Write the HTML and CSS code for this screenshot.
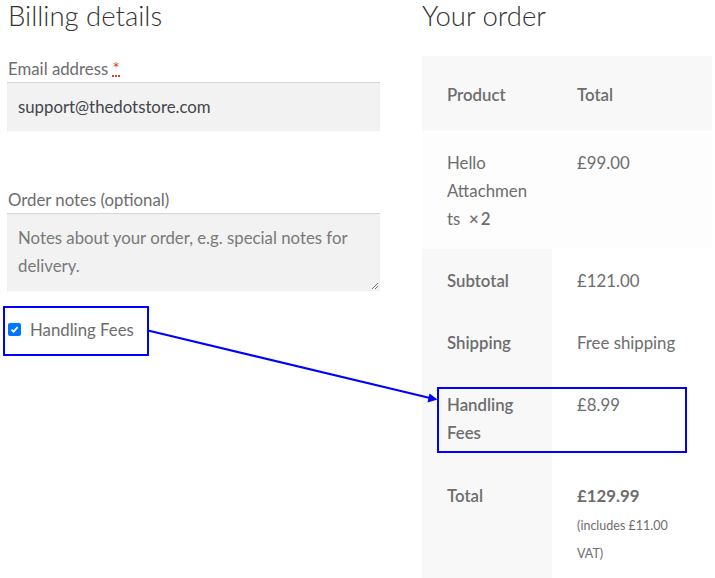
FILE: index.html
```html
<!DOCTYPE html>
<html lang="en">
<head>
<meta charset="utf-8">
<title>Checkout</title>
<link rel="stylesheet" href="styles.css">
</head>
<body>
<div class="page">
  <div class="billing">
    <h3 class="heading">Billing details</h3>
    <div class="field">
      <label class="label">Email address&nbsp;<abbr class="required" title="required">*</abbr></label>
      <div class="input">support@thedotstore.com</div>
    </div>
    <div class="field notes">
      <label class="label">Order notes (optional)</label>
      <div class="textarea">
        <span class="placeholder">Notes about your order, e.g. special notes for delivery.</span>
        <svg class="grip" width="9" height="9" viewBox="0 0 9 9"><path d="M8 2 L2 8 M8 5 L5 8" stroke="#777" stroke-width="1"/></svg>
      </div>
    </div>
    <div class="check-row">
      <span class="checkbox"><svg width="9" height="9" viewBox="0 0 9 9"><path d="M1.5 4.6 L3.6 6.7 L7.6 2.2" stroke="#fff" stroke-width="1.8" fill="none"/></svg></span>
      <span class="check-label">Handling Fees</span>
    </div>
  </div>
  <div class="order">
    <h3 class="heading">Your order</h3>
    <table class="order-table">
      <thead>
        <tr><th class="c1">Product</th><th class="c2">Total</th></tr>
      </thead>
      <tbody>
        <tr class="item"><td class="c1">Hello<br>Attachmen<br>ts&nbsp; <strong class="qty">×&thinsp;2</strong></td><td class="c2">£99.00</td></tr>
      </tbody>
      <tfoot>
        <tr><th>Subtotal</th><td>£121.00</td></tr>
        <tr><th>Shipping</th><td>Free shipping</td></tr>
        <tr><th>Handling<br>Fees</th><td>£8.99</td></tr>
        <tr class="total"><th>Total</th><td><strong>£129.99</strong><small class="tax">(includes £11.00<br>VAT)</small></td></tr>
      </tfoot>
    </table>
  </div>
</div>
<div class="annot box1"></div>
<div class="annot box2"></div>
<svg class="arrow" width="715" height="578" viewBox="0 0 715 578">
  <line x1="148" y1="330.5" x2="430" y2="398" stroke="#0000ff" stroke-width="2"/>
  <polygon points="437.5,399.5 427.5,402.5 429.5,393.5" fill="#0000ff"/>
</svg>
</body>
</html>
```

FILE: styles.css
```css
* { box-sizing: border-box; }
html, body { margin: 0; padding: 0; background: #fff; }
body {
  font-family: Lato, "Open Sans", sans-serif;
  font-size: 16.8px;
  line-height: 28px;
  color: #6d6d6d;
  width: 715px;
  height: 578px;
  overflow: hidden;
  position: relative;
}
.page {
  display: flex;
  padding-left: 7px;
  gap: 42px;
}
.billing { width: 373px; }
.order { width: 290px; }
.heading {
  margin: 0 0 22px 1px;
  font-size: 27.5px;
  line-height: 32px;
  font-weight: 300;
  color: #333;
}
.order .heading { margin-bottom: 24px; margin-left: 0; }
.label { display: block; margin-left: 1px; padding-top: 1px; margin-bottom: -1px; }
.required {
  color: #e2401c;
  text-decoration: none;
  border-bottom: 2px dotted #e2401c;
  line-height: 12px;
  display: inline-block;
}
.input {
  height: 49px;
  background: #f2f2f2;
  box-shadow: inset 0 1px 1px rgba(0,0,0,.13);
  padding: 11px 11px 9px;
  color: #43454b;
}
.notes { margin-top: 54px; }
.textarea {
  position: relative;
  height: 78px;
  background: #f2f2f2;
  box-shadow: inset 0 1px 1px rgba(0,0,0,.13);
  padding: 11px 11px;
}
.placeholder { color: #797979; }
.grip { position: absolute; right: 1px; bottom: 1px; }
.check-row {
  display: flex;
  align-items: center;
  margin-top: 24px;
  height: 28px;
  padding-left: 1px;
}
.checkbox {
  width: 13px;
  height: 13px;
  background: #0075ff;
  border-radius: 2px;
  display: flex;
  align-items: center;
  justify-content: center;
  margin-right: 9px;
}
.check-label { padding-top: 1px; }
.checkbox svg { display: block; }
.order-table {
  width: 290px;
  border-collapse: collapse;
  border-spacing: 0;
}
.order-table th, .order-table td {
  text-align: left;
  vertical-align: top;
  padding: 18px 25px 16px;
}
.order-table .c1 { width: 130px; }
.order-table thead th {
  background: #f8f8f8;
  font-weight: 600;
  padding-top: 25px;
  padding-bottom: 22px;
}
.order-table tbody td { background: #fdfdfd; }
.order-table tfoot th { background: #f8f8f8; font-weight: 600; }
.order-table tfoot td { background: #fff; }
.order-table tfoot .total th, .order-table tfoot .total td { padding-top: 19px; }
.qty { font-weight: 600; }
.total strong { font-weight: 700; }
.tax { display: block; font-size: 12.5px; line-height: 28px; margin-top: 2px; }
.annot {
  position: absolute;
  border: 2px solid #0000ff;
}
.box1 { left: 3px; top: 306px; width: 146px; height: 50px; }
.box2 { left: 437px; top: 387px; width: 250px; height: 66px; }
.arrow { position: absolute; left: 0; top: 0; pointer-events: none; }
```
